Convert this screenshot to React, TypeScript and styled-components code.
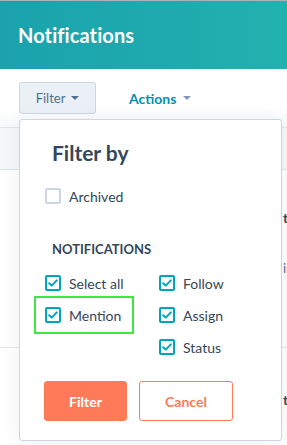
import React from "react";
import styled, {createGlobalStyle} from "styled-components";

const GlobalStyle = createGlobalStyle`
  html, body {
    margin: 0;
    padding: 0;
    background: #fff;
    overflow: hidden;
  }
  body {
    font-family: Lato, "Open Sans", sans-serif;
    color: #33475b;
  }
`;

const Page = styled.div`
  position: relative;
  width: 287px;
  height: 445px;
  overflow: hidden;
`;

const Header = styled.header`
  height: 68px;
  border-top: 1px solid #a9b4b8;
  background: linear-gradient(90deg, #1ba2ad 0%, #21b1ae 100%);
  display: flex;
  align-items: center;
  padding-left: 18px;
`;

const Title = styled.h1`
  margin: 0;
  font-size: 20px;
  font-weight: 700;
  color: #fff;
  letter-spacing: 0.1px;
`;

const Toolbar = styled.div`
  height: 58px;
  display: flex;
  align-items: center;
  padding-left: 19px;
  gap: 33px;
  border-bottom: 1px solid #dfe3eb;
  background: linear-gradient(180deg, #fff 70%, #f7f9fa 100%);
`;

const ToolButton = styled.button`
  height: 32px;
  width: 77px;
  display: flex;
  align-items: center;
  justify-content: center;
  gap: 6px;
  background: #eaf0f6;
  border: 1px solid #cbd6e2;
  border-radius: 3px;
  font-family: inherit;
  font-size: 13px;
  color: #516f90;
  padding: 0;
`;

const LinkButton = styled.button`
  background: none;
  border: none;
  padding: 0;
  display: flex;
  align-items: center;
  gap: 7px;
  font-family: inherit;
  font-size: 14px;
  font-weight: 700;
  color: #0091ae;
`;

const Caret = styled.span<{$color: string}>`
  width: 0;
  height: 0;
  border-left: 4px solid transparent;
  border-right: 4px solid transparent;
  border-top: 4px solid ${(p) => p.$color};
`;

const TableHead = styled.div`
  height: 41px;
  background: #f5f8fa;
  border-bottom: 1px solid #dfe3eb;
`;

const Row = styled.div<{$height: number}>`
  height: ${(p) => p.$height}px;
  border-bottom: 1px solid #e5e8ed;
  padding-left: 283px;
  box-sizing: border-box;
  white-space: nowrap;
`;

const RowTitle = styled.div<{$top: number}>`
  padding-top: ${(p) => p.$top}px;
  font-size: 14px;
  font-weight: 700;
  color: #33475b;
  line-height: 20px;
`;

const RowMeta = styled.div`
  margin-top: 30px;
  font-size: 13px;
  color: #516f90;
  line-height: 20px;
`;

const Panel = styled.div`
  position: absolute;
  left: 19px;
  top: 119px;
  width: 263px;
  box-sizing: border-box;
  background: #fff;
  border: 1px solid #cbd6e2;
  border-radius: 3px;
  box-shadow: 0 1px 20px rgba(45, 62, 80, 0.08);
  padding: 20px 0 19px 25px;
`;

const PanelTitle = styled.h2`
  margin: 0 0 20px 7px;
  font-size: 21px;
  line-height: 26px;
  font-weight: 700;
  color: #33475b;
`;

const SectionTitle = styled.h3`
  margin: 35px 0 16px 7px;
  font-size: 13px;
  line-height: 16px;
  font-weight: 700;
  color: #33475b;
  text-transform: uppercase;
`;

const OptionGrid = styled.div`
  display: grid;
  grid-template-columns: 114px auto;
  grid-auto-flow: column;
  grid-template-rows: repeat(3, 20px);
  row-gap: 12px;
`;

const Option = styled.label<{$highlight?: boolean}>`
  position: relative;
  display: flex;
  align-items: center;
  gap: 8px;
  height: 20px;
  font-size: 14px;
  color: #33475b;

  ${(p) =>
    p.$highlight &&
    `
    &::after {
      content: "";
      position: absolute;
      left: -11px;
      top: -9px;
      width: 100px;
      height: 38px;
      box-sizing: border-box;
      border: 2px solid #3ee83e;
    }
  `}
`;

const Box = styled.span<{$checked?: boolean}>`
  width: 16px;
  height: 16px;
  box-sizing: border-box;
  border-radius: 2px;
  border: ${(p) => (p.$checked ? "2px solid #00a4bd" : "2px solid #cbd6e2")};
  background: #fff;
  display: flex;
  align-items: center;
  justify-content: center;
  flex: none;
`;

const Actions = styled.div`
  display: flex;
  gap: 12px;
  margin: 24px 0 0 -1px;
`;

const Button = styled.button<{$primary?: boolean}>`
  height: 40px;
  width: ${(p) => (p.$primary ? 83 : 94)}px;
  border-radius: 3px;
  border: 1px solid #ff7a59;
  background: ${(p) => (p.$primary ? "#ff7a59" : "#fff")};
  color: ${(p) => (p.$primary ? "#fff" : "#ff7a59")};
  font-family: inherit;
  font-size: 14px;
  font-weight: 700;
  padding: 0;
`;

function Check() {
  return (
    <svg width="10" height="8" viewBox="0 0 10 8">
      <path d="M1.2 4.2 L3.8 6.6 L8.8 1.4" fill="none" stroke="#00a4bd" strokeWidth="2" strokeLinecap="round" strokeLinejoin="round" />
    </svg>
  );
}

function Checkbox({label, checked, highlight}: {label: string; checked?: boolean; highlight?: boolean}) {
  return (
    <Option $highlight={highlight}>
      <Box $checked={checked}>{checked && <Check />}</Box>
      {label}
    </Option>
  );
}

export default function App() {
  return (
    <Page>
      <GlobalStyle />
      <Header>
        <Title>Notifications</Title>
      </Header>
      <Toolbar>
        <ToolButton>
          Filter <Caret $color="#516f90" />
        </ToolButton>
        <LinkButton>
          Actions <Caret $color="#7c98b6" />
        </LinkButton>
      </Toolbar>
      <TableHead />
      <Row $height={178}>
        <RowTitle $top={38}>the task</RowTitle>
        <RowMeta>in progress</RowMeta>
      </Row>
      <Row $height={100}>
        <RowTitle $top={42}>the task</RowTitle>
      </Row>

      <Panel>
        <PanelTitle>Filter by</PanelTitle>
        <Checkbox label="Archived" />
        <SectionTitle>Notifications</SectionTitle>
        <OptionGrid>
          <Checkbox label="Select all" checked />
          <Checkbox label="Mention" checked highlight />
          <span />
          <Checkbox label="Follow" checked />
          <Checkbox label="Assign" checked />
          <Checkbox label="Status" checked />
        </OptionGrid>
        <Actions>
          <Button $primary>Filter</Button>
          <Button>Cancel</Button>
        </Actions>
      </Panel>
    </Page>
  );
}
